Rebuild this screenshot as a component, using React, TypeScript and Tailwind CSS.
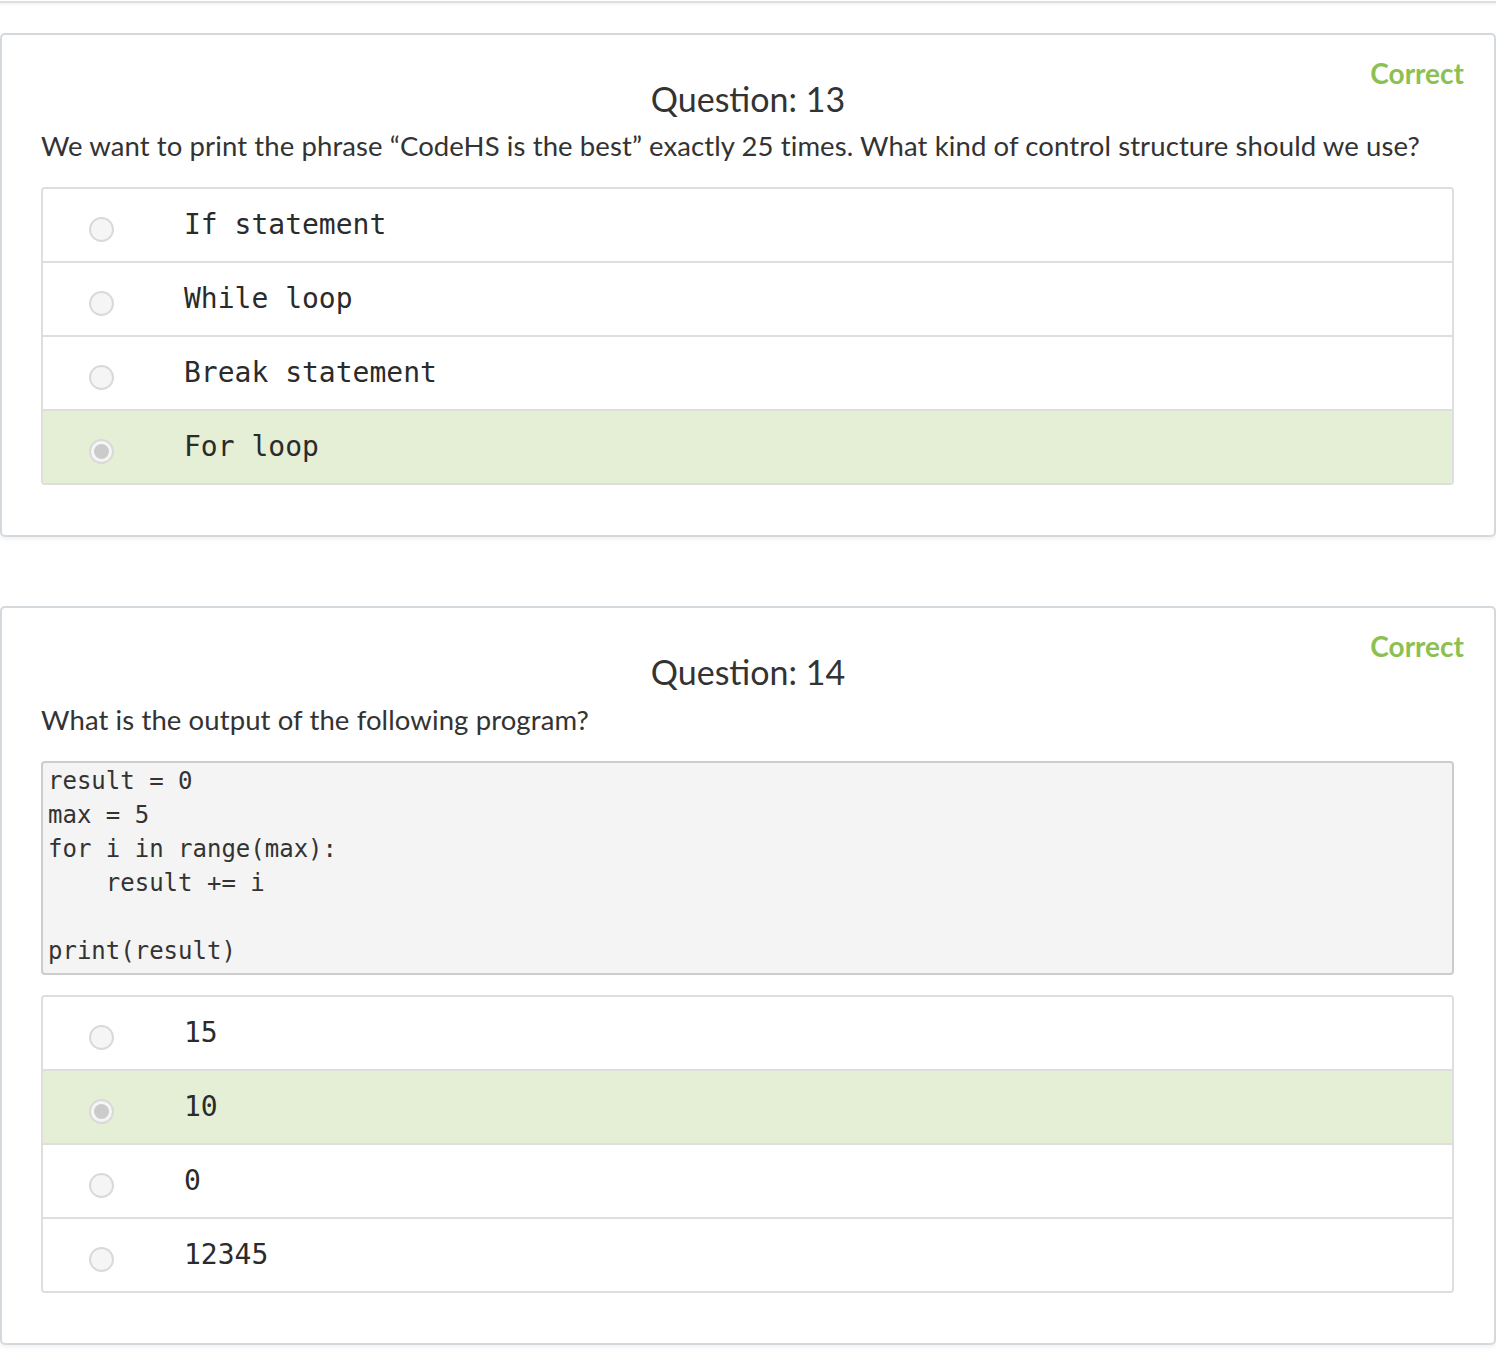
import React from "react";

type Option = { label: string; selected?: boolean };

const sans = { fontFamily: "Lato, 'Open Sans', sans-serif" };
const mono = { fontFamily: "'DejaVu Sans Mono', 'Liberation Mono', monospace" };

const Radio = ({ checked }: { checked?: boolean }) => (
  <div className="mt-[9px] w-[25px] h-[25px] rounded-full border-2 border-[#d9d9d9] bg-[#f5f5f5] flex items-center justify-center shrink-0">
    {checked && <div className="w-[15px] h-[15px] rounded-full bg-[#cbcbcb]" />}
  </div>
);

const Options = ({ options }: { options: Option[] }) => (
  <div className="border-2 border-[#dedede] rounded-[4px] overflow-hidden">
    {options.map((o, i) => (
      <div
        key={o.label}
        className={`h-[72px] box-content flex items-center pl-[46px] ${i > 0 ? "border-t-2 border-[#dedede]" : ""} ${o.selected ? "bg-[#e4efd6]" : "bg-white"}`}
      >
        <Radio checked={o.selected} />
        <span className="ml-[70px] text-[28px] text-[#2b2b2b] leading-none" style={mono}>
          {o.label}
        </span>
      </div>
    ))}
  </div>
);

const QuestionCard = ({
  number,
  text,
  code,
  options,
}: {
  number: number;
  text: string;
  code?: string;
  options: Option[];
}) => (
  <div className="bg-white border-2 border-[#d4d9de] rounded-[5px] shadow-[0_2px_4px_rgba(0,0,0,0.06)] pt-[27px] pb-[50px] pl-[39px] pr-[40px]">
    {/* status */}
    <div className="flex justify-end -mr-[10px]">
      <span className="text-[28px] leading-[22px] font-bold text-[#8cc152]" style={sans}>
        Correct
      </span>
    </div>
    <h3 className="text-center text-[34px] leading-[34px] text-[#333] -mt-[2px] -ml-[39px] -mr-[40px]" style={sans}>
      Question: {number}
    </h3>
    <p
      className={`text-[27.5px] tracking-[0.1px] leading-[36px] text-[#333] ${code ? "mt-[13px]" : "mt-[12px]"}`}
      style={sans}
    >
      {text}
    </p>
    {code && (
      <pre
        className="mt-[23px] bg-[#f4f4f4] border-2 border-[#cccccc] rounded-[4px] px-[5px] pt-[1px] pb-[5px] text-[24px] leading-[34px] text-[#333]"
        style={mono}
      >
        {code}
      </pre>
    )}
    <div className={code ? "mt-[20px]" : "mt-[23px]"}>
      <Options options={options} />
    </div>
  </div>
);

export default function App() {
  return (
    <div className="bg-white min-h-screen w-[1496px]">
      {/* bottom edge of the previous card */}
      <div className="h-[3px] border-b-2 border-[#dcdfe2] shadow-[0_1px_3px_rgba(0,0,0,0.08)]" />
      <div className="pt-[30px] flex flex-col gap-[69px]">
        <QuestionCard
          number={13}
          text="We want to print the phrase “CodeHS is the best” exactly 25 times. What kind of control structure should we use?"
          options={[
            { label: "If statement" },
            { label: "While loop" },
            { label: "Break statement" },
            { label: "For loop", selected: true },
          ]}
        />
        <QuestionCard
          number={14}
          text="What is the output of the following program?"
          code={"result = 0\nmax = 5\nfor i in range(max):\n    result += i\n\nprint(result)"}
          options={[
            { label: "15" },
            { label: "10", selected: true },
            { label: "0" },
            { label: "12345" },
          ]}
        />
      </div>
    </div>
  );
}
